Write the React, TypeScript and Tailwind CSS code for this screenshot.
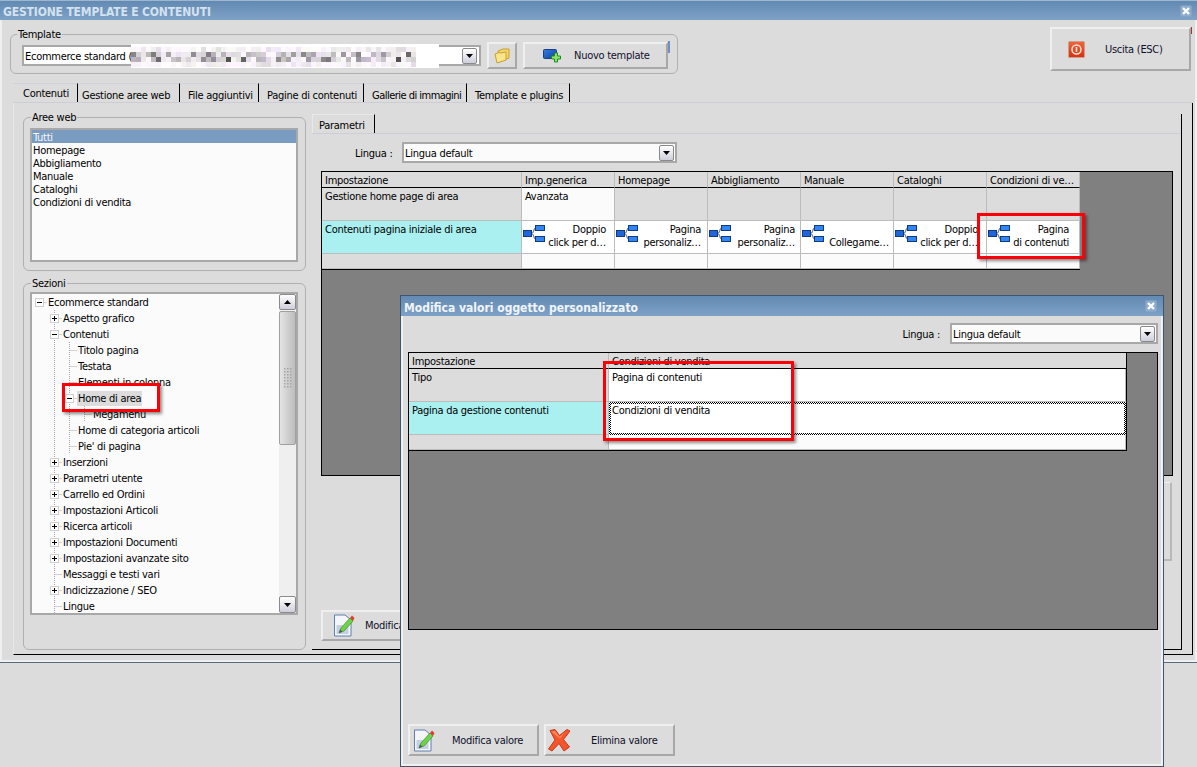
import React from "react";

const btn = "border-2 border-t-[#efefef] border-l-[#efefef] border-r-[#a8a8a8] border-b-[#a8a8a8] bg-[#dcdcdc] text-[#10102a]";

function Close() {
  return (
    <svg width="12" height="12" viewBox="0 0 12 12" className="shrink-0">
      <rect x="0.5" y="0.5" width="11" height="11" rx="1" fill="#8eaccb" />
      <path d="M3 3 L9 9 M9 3 L3 9" stroke="#ffffff" strokeWidth="2.4" />
    </svg>
  );
}

function DropBtn() {
  return (
    <span className="w-[15px] h-[16px] rounded-[2px] border border-[#8a8a8a] bg-linear-to-b from-[#ffffff] to-[#cfcfdc] flex items-center justify-center shrink-0">
      <svg width="7" height="4" viewBox="0 0 7 4"><path d="M0 0 H7 L3.5 4 Z" fill="#000" /></svg>
    </span>
  );
}

function TreeIcon() {
  return (
    <svg width="22" height="17" viewBox="0 0 22 17" className="shrink-0">
      <path d="M9 8 C11.5 8 10 3 13 3 M9 9 C11.5 9 10 14 13 14" stroke="#6d7a88" strokeWidth="1.2" fill="none" />
      <rect x="0.5" y="5.5" width="8" height="6" fill="#1f66dc" stroke="#123a80" />
      <rect x="12.5" y="0.5" width="9" height="5" fill="#2f86f4" stroke="#123a80" />
      <rect x="12.5" y="11.5" width="9" height="5" fill="#2f86f4" stroke="#123a80" />
    </svg>
  );
}

function Folder() {
  return (
    <svg width="16" height="16" viewBox="0 0 16 16">
      <path d="M4 3 L9 1 L15 1 L15 10 L5 14 Z" fill="#f4d56a" stroke="#c9a12e" />
      <path d="M1 6 L5 4.5 L7 5 L12 4 L12 12 L3 15 Z" fill="#fbe58a" stroke="#c9a12e" />
    </svg>
  );
}

function NewIcon() {
  return (
    <svg width="19" height="14" viewBox="0 0 19 14">
      <defs>
        <linearGradient id="nb" x1="0" y1="0" x2="1" y2="1">
          <stop offset="0" stopColor="#2f7fe6" />
          <stop offset="1" stopColor="#143f9c" />
        </linearGradient>
      </defs>
      <rect x="0.5" y="0.5" width="13" height="9" rx="1" fill="url(#nb)" stroke="#1b3f80" />
      <path d="M8.5 7 H11.5 V4 H14.5 V7 H17.5 V10 H14.5 V13 H11.5 V10 H8.5 Z" fill="#8fe36a" stroke="#1c8a1c" />
    </svg>
  );
}

function PowerIcon() {
  return (
    <svg width="17" height="17" viewBox="0 0 17 17">
      <defs>
        <linearGradient id="pw" x1="0" y1="0" x2="0" y2="1">
          <stop offset="0" stopColor="#f0653a" />
          <stop offset="1" stopColor="#d8300f" />
        </linearGradient>
      </defs>
      <rect x="0.5" y="0.5" width="16" height="16" rx="1" fill="url(#pw)" stroke="#c9a090" />
      <circle cx="8.5" cy="8.5" r="4.5" fill="none" stroke="#fbe3d8" strokeWidth="1.5" />
      <rect x="7.7" y="6" width="1.6" height="5" fill="#fbe3d8" />
    </svg>
  );
}

function EditIcon() {
  return (
    <svg width="22" height="23" viewBox="0 0 22 23">
      <path d="M0.5 1 H11 L17 6 V22 H0.5 Z" fill="#f4f6fb" stroke="#5f7fb0" />
      <rect x="2.5" y="11" width="12" height="9" fill="#c5cfe2" />
      <path d="M5 19 L7 14 L16 4 L19 7 L10 17 Z" fill="#6fd34a" stroke="#3a8f22" strokeWidth="0.7" />
      <path d="M16 4 L18 1.5 L20.5 4 L19 7 Z" fill="#e0402a" />
      <path d="M5 19 L6 15.5 L8.5 17.5 Z" fill="#555" />
    </svg>
  );
}

function XIcon() {
  return (
    <svg width="23" height="23" viewBox="0 0 23 23">
      <path d="M2 1.5 L7 0.5 L11.5 6.5 L19 0.5 L22 2 L15.5 10.5 L21.5 18 L16 22 L11 14.5 L4 22 L0.5 20 L7 11 Z" fill="#f4552a" stroke="#c7391a" />
      <path d="M3 2.5 L7 2 L11.5 8 L17 3 L12 9.5 Z" fill="#ff8a5c" />
    </svg>
  );
}

function Mosaic() {
  const rects: React.ReactElement[] = [];
  let s = 7;
  const rnd = () => {
    s = (s * 16807) % 2147483647;
    return (s & 1023) / 1023;
  };
  for (let y = 0; y < 4; y++) {
    for (let x = 0; x < 57; x++) {
      const depth = y === 1 || y === 2 ? 0.55 : 0.1;
      const v = Math.round(255 - rnd() * rnd() * 255 * depth * 1.4);
      const t = Math.round(rnd() * 10);
      rects.push(
        <rect key={`${x}-${y}`} x={x * 5} y={3 + y * 5} width="5" height="5" fill={`rgb(${v},${Math.max(v - t, 0)},${Math.min(v + t - 5, 255)})`} />
      );
    }
  }
  return (
    <svg width="308" height="24" viewBox="0 0 308 24" className="absolute left-[131px] top-[44px]">
      <rect width="308" height="24" fill="#ffffff" />
      {rects}
    </svg>
  );
}

function Slot({ kind }: { kind: "plus" | "minus" | "leaf" | "line" | "none" | "root" }) {
  const c = "#a6a6a6";
  return (
    <svg width="15" height="16" viewBox="0 0 15 16" className="shrink-0">
      {kind !== "none" && kind !== "root" && <path d="M7.5 0 V16" stroke={c} strokeDasharray="1 1" />}
      {(kind === "plus" || kind === "minus" || kind === "leaf" || kind === "root") && <path d="M7.5 8.5 H15" stroke={c} strokeDasharray="1 1" />}
      {(kind === "plus" || kind === "minus" || kind === "root") && (
        <>
          <rect x="3.5" y="4.5" width="8" height="8" fill="#ffffff" stroke="#cfcfcf" />
          <path d="M5 8.5 H10" stroke="#000" />
          {kind === "plus" && <path d="M7.5 6 V11" stroke="#000" />}
        </>
      )}
    </svg>
  );
}

type TreeRow = { t: string; s: ("plus" | "minus" | "leaf" | "line" | "none" | "root")[]; sel?: boolean };
const tree: TreeRow[] = [
  { t: "Ecommerce standard", s: ["root"] },
  { t: "Aspetto grafico", s: ["none", "plus"] },
  { t: "Contenuti", s: ["none", "minus"] },
  { t: "Titolo pagina", s: ["none", "line", "leaf"] },
  { t: "Testata", s: ["none", "line", "leaf"] },
  { t: "Elementi in colonna", s: ["none", "line", "leaf"] },
  { t: "Home di area", s: ["none", "line", "minus"], sel: true },
  { t: "Megamenu", s: ["none", "line", "line", "leaf"] },
  { t: "Home di categoria articoli", s: ["none", "line", "leaf"] },
  { t: "Pie' di pagina", s: ["none", "line", "leaf"] },
  { t: "Inserzioni", s: ["none", "plus"] },
  { t: "Parametri utente", s: ["none", "plus"] },
  { t: "Carrello ed Ordini", s: ["none", "plus"] },
  { t: "Impostazioni Articoli", s: ["none", "plus"] },
  { t: "Ricerca articoli", s: ["none", "plus"] },
  { t: "Impostazioni Documenti", s: ["none", "plus"] },
  { t: "Impostazioni avanzate sito", s: ["none", "plus"] },
  { t: "Messaggi e testi vari", s: ["none", "leaf"] },
  { t: "Indicizzazione / SEO", s: ["none", "plus"] },
  { t: "Lingue", s: ["none", "leaf"] },
];

const headers = ["Impostazione", "Imp.generica", "Homepage", "Abbigliamento", "Manuale", "Cataloghi", "Condizioni di ve…"];
const cell = "border-r border-b border-[#bcbcbc] overflow-hidden whitespace-nowrap";

const icons: { a: string; b: string; pr: string }[] = [
  { a: "Doppio", b: "click per d…", pr: "pr-[8px]" },
  { a: "Pagina", b: "personaliz…", pr: "pr-[6px]" },
  { a: "Pagina", b: "personaliz…", pr: "pr-[5px]" },
  { a: "", b: "Collegame…", pr: "pr-[4px]" },
  { a: "Doppio", b: "click per d…", pr: "pr-[8px]" },
  { a: "Pagina", b: "di contenuti", pr: "pr-[10px]" },
];

const tabs = [
  { t: "Contenuti", c: "w-[65px] pl-[10px] pt-[3px] bg-[#dcdcdc]" },
  { t: "Gestione aree web", c: "w-[102px] pl-[4px] pt-[5px]" },
  { t: "File aggiuntivi", c: "w-[79px] pl-[8px] pt-[5px]" },
  { t: "Pagine di contenuti", c: "w-[105px] pl-[8px] pt-[5px]" },
  { t: "Gallerie di immagini", c: "w-[103px] pl-[8px] pt-[5px] tracking-[-0.52px]" },
  { t: "Template e plugins", c: "w-[103px] pl-[8px] pt-[5px]" },
];

function RedBox({ c }: { c: string }) {
  return <div className={`absolute border-[3px] border-[#fb0007] shadow-[2px_2px_3px_rgba(0,0,0,0.45)] ${c}`} />;
}

export default function App() {
  return (
    <div className="relative w-[1197px] h-[767px] overflow-hidden bg-[#dcdcdc] text-[11px] leading-[13px] tracking-[-0.27px] text-black font-['DejaVu_Sans',sans-serif] font-stretch-condensed">
      {/* main window */}
      <div className="h-[663px] border-b border-[#5a6b7c] flex flex-col">
        <div className="h-[20px] shrink-0 border-t border-[#9fb6cf] bg-linear-to-b from-[#628ab2] to-[#7fa1c6] flex items-center justify-between pl-[3px] pr-[5px]">
          <span className="font-bold text-[12px] tracking-[-0.15px] text-[#d3e2ef] pt-[3px]">GESTIONE TEMPLATE E CONTENUTI</span>
          <Close />
        </div>

        <div className="flex-1 min-h-0 flex flex-col border-l-2 border-r-2 border-b-2 border-[#f0f0f0]">
          <div className="flex items-start pt-[7px] pl-[8px] pr-[4px] h-[54px] shrink-0 justify-between">
            <fieldset className="w-[668px] h-[47px] border border-[#b0b0b0] rounded-[6px] flex items-start">
              <legend className="ml-[6px] px-[1px] h-[14px] leading-[16px]">Template</legend>
              <div className="flex items-center pl-[11px] h-[27px] mt-[1px]">
                <div className="w-[459px] h-[21px] border-2 border-[#a8a8a8] bg-white flex items-center justify-between pl-[1px] pr-[2px]">
                  <span className="pt-[2px]">Ecommerce standard (</span>
                  <DropBtn />
                </div>
                <button className={`${btn} ml-[6px] w-[30px] h-[27px] flex items-center justify-center`}><Folder /></button>
                <button className={`${btn} ml-[6px] w-[145px] h-[27px] flex items-center pl-[18px]`}>
                  <NewIcon />
                  <span className="ml-[12px]">Nuovo template</span>
                </button>
              </div>
            </fieldset>
            <button className={`${btn} w-[141px] h-[44px] flex items-center pl-[16px]`}>
              <PowerIcon />
              <span className="ml-[20px]">Uscita (ESC)</span>
            </button>
          </div>

          <div className="pt-[9px] pl-[11px] shrink-0">
            <div className="flex h-[20px] w-[1180px] border-b border-[#cdcdd6]">
              {tabs.map((t) => (
                <div key={t.t} className={`${t.c} h-[19px] border-r border-r-black border-t border-t-[#d2d2da] whitespace-nowrap`}>{t.t}</div>
              ))}
            </div>
          </div>

          <div className="ml-[11px] w-[1180px] h-[552px] shrink-0 border-l border-[#e8e8e8] border-r border-r-black border-b border-b-black flex pl-[9px] pr-[10px] pt-[7px]">
            <div className="w-[283px] shrink-0">
              <fieldset className="h-[161px] border border-[#b0b0b0] rounded-[6px] px-[6px]">
                <legend className="ml-[1px] px-[1px] h-[14px] leading-[16px]">Aree web</legend>
                <div className="mt-[4px] h-[134px] w-[268px] border-2 border-[#a8a8a8] bg-[#fbfbfb]">
                  {["Tutti", "Homepage", "Abbigliamento", "Manuale", "Cataloghi", "Condizioni di vendita"].map((x, i) => (
                    <div key={x} className={`h-[13px] leading-[15px] pl-[1px] ${i === 0 ? "bg-[#7a9cc0] text-[#f4f8fb]" : ""}`}>{x}</div>
                  ))}
                </div>
              </fieldset>
              <fieldset className="mt-[5px] h-[374px] border border-[#b0b0b0] rounded-[6px] px-[6px]">
                <legend className="ml-[1px] px-[1px] h-[14px] leading-[16px]">Sezioni</legend>
                <div className="mt-[2px] h-[323px] w-[268px] border-2 border-[#a8a8a8] bg-[#fbfbfb] flex overflow-hidden">
                  <div className="w-[247px] shrink-0 h-[319px] overflow-hidden">
                    {tree.map((r) => (
                      <div key={r.t} className="h-[16px] flex items-center">
                        {r.s.map((k, i) => <Slot key={i} kind={k} />)}
                        <span className={`h-[15px] leading-[16px] px-[1px] whitespace-nowrap ${r.sel ? "bg-[#dcdcdc]" : ""}`}>{r.t}</span>
                      </div>
                    ))}
                  </div>
                  <div className="w-[17px] shrink-0 bg-[#efefef] flex flex-col">
                    <div className="h-[16px] rounded-[2px] border border-[#8a8a8a] bg-linear-to-b from-white to-[#cfcfdc] flex items-center justify-center shrink-0">
                      <svg width="7" height="4" viewBox="0 0 7 4"><path d="M0 4 H7 L3.5 0 Z" fill="#000" /></svg>
                    </div>
                    <div className="mt-[1px] h-[134px] rounded-[2px] border border-[#a0a0a0] bg-linear-to-r from-[#e4e4e4] to-[#bdbdbd] flex items-center justify-center shrink-0">
                      <svg width="8" height="21" viewBox="0 0 8 21">
                        {[0, 3, 6, 9, 12, 15, 18].map((y) => (
                          <g key={y} fill="#a4a4a4">
                            <rect x="0" y={y} width="1.5" height="1.5" />
                            <rect x="3" y={y} width="1.5" height="1.5" />
                            <rect x="6" y={y} width="1.5" height="1.5" />
                          </g>
                        ))}
                      </svg>
                    </div>
                    <div className="flex-1" />
                    <div className="h-[17px] rounded-[2px] border border-[#8a8a8a] bg-linear-to-b from-white to-[#cfcfdc] flex items-center justify-center shrink-0">
                      <svg width="7" height="4" viewBox="0 0 7 4"><path d="M0 0 H7 L3.5 4 Z" fill="#000" /></svg>
                    </div>
                  </div>
                </div>
              </fieldset>
            </div>

            <div className="ml-[6px] mt-[4px] w-[870px] h-[536px] border-r border-b border-black flex flex-col">
              <div className="flex h-[20px] border-b border-[#cdcdd6] shrink-0">
                <div className="w-[63px] h-[19px] border-l border-t border-[#e8e8e8] border-r border-r-black pl-[6px] pt-[4px]">Parametri</div>
              </div>
              <div className="flex items-center mt-[8px] h-[21px] shrink-0">
                <span className="ml-[43px] w-[47px] pt-[2px]">Lingua :</span>
                <div className="w-[275px] h-[21px] border-2 border-[#a8a8a8] bg-[#fbfbfb] flex items-center justify-between pl-[1px] pr-[1px]">
                  <span className="pt-[2px]">Lingua default</span>
                  <DropBtn />
                </div>
              </div>

              <div className="ml-[9px] mt-[8px] w-[852px] h-[305px] shrink-0 border border-black bg-[#808080]">
                <div className="w-[758px] border-r border-b border-black grid grid-cols-[200px_93px_93px_93px_93px_93px_93px]">
                  {headers.map((h) => (
                    <div key={h} className="h-[16px] bg-[#dcdcdc] border-r border-[#bcbcbc] border-b border-b-black pl-[3px] pt-[2px] whitespace-nowrap">{h}</div>
                  ))}
                  <div className={`${cell} h-[33px] bg-[#dcdcdc] pl-[3px] pt-[2px]`}>Gestione home page di area</div>
                  <div className={`${cell} h-[33px] bg-[#fbfbfb] pl-[3px] pt-[2px]`}>Avanzata</div>
                  {[1, 2, 3, 4, 5].map((i) => <div key={i} className={`${cell} h-[33px] bg-[#dcdcdc]`} />)}
                  <div className={`${cell} h-[33px] bg-[#aaf0f0] pl-[3px] pt-[2px]`}>Contenuti pagina iniziale di area</div>
                  {icons.map((c, i) => (
                    <div key={i} className={`${cell} h-[33px] bg-white flex pl-[1px] pt-[4px]`}>
                      <TreeIcon />
                      <div className={`flex-1 text-right ${c.pr} -mt-[2px]`}>
                        <div className="h-[13px]">{c.a}</div>
                        <div>{c.b}</div>
                      </div>
                    </div>
                  ))}
                  <div className={`${cell} h-[15px] bg-[#dcdcdc]`} />
                  {[1, 2, 3, 4, 5, 6].map((i) => <div key={i} className={`${cell} h-[15px] bg-[#fbfbfb]`} />)}
                </div>
              </div>

              <div className="mt-[6px] ml-[108px] w-[752px] h-[79px] shrink-0 border-t border-l border-[#efefef] border-r-2 border-b-2 border-r-[#b8b8b8] border-b-[#b8b8b8]" />

              <button className={`${btn} mt-[49px] ml-[9px] w-[131px] h-[31px] flex items-center pl-[11px] shrink-0`}>
                <EditIcon />
                <span className="ml-[9px]">Modifica valore</span>
              </button>
            </div>
          </div>
        </div>
      </div>

      <Mosaic />
      <div className="absolute left-[668px] top-[41px] w-[2px] h-[12px] bg-[#6f8fc0]" />
      <div className="absolute left-[1191px] top-[27px] w-[1px] h-[7px] bg-[#b03030]" />

      <RedBox c="left-[977px] top-[213px] w-[108px] h-[46px]" />
      <RedBox c="left-[62px] top-[383px] w-[98px] h-[29px]" />

      {/* dialog */}
      <div className="absolute left-[400px] top-[295px] w-[764px] h-[472px] border border-[#3d566f] flex flex-col bg-[#dcdcdc]">
        <div className="h-[20px] shrink-0 bg-linear-to-b from-[#628ab2] to-[#7fa1c6] flex items-center justify-between pl-[3px] pr-[6px]">
          <span className="font-bold text-[12px] tracking-normal text-[#f0f5fa] pt-[5px]">Modifica valori oggetto personalizzato</span>
          <Close />
        </div>
        <div className="flex-1 border-l-2 border-r-2 border-b-2 border-[#f0f0f0] pl-[5px] pr-[3px] pt-[7px]">
          <div className="flex items-center justify-end h-[21px]">
            <span className="mr-[10px] pt-[2px]">Lingua :</span>
            <div className="w-[208px] h-[21px] border-2 border-[#a8a8a8] bg-[#fbfbfb] flex items-center justify-between pl-[1px] pr-[1px]">
              <span className="pt-[2px]">Lingua default</span>
              <DropBtn />
            </div>
          </div>
          <div className="mt-[8px] h-[278px] border border-black bg-[#808080]">
            <div className="w-[718px] border-r border-b border-black grid grid-cols-[200px_517px]">
              <div className="h-[16px] bg-[#dcdcdc] border-r border-[#bcbcbc] border-b border-b-black pl-[3px] pt-[2px]">Impostazione</div>
              <div className="h-[16px] bg-[#dcdcdc] border-b border-b-black pl-[3px] pt-[2px]">Condizioni di vendita</div>
              <div className={`${cell} h-[33px] bg-[#dcdcdc] pl-[3px] pt-[2px]`}>Tipo</div>
              <div className={`${cell} h-[33px] bg-white pl-[3px] pt-[2px]`}>Pagina di contenuti</div>
              <div className={`${cell} h-[33px] bg-[#aaf0f0] pl-[3px] pt-[2px]`}>Pagina da gestione contenuti</div>
              <div className="h-[33px] p-[2px] bg-[repeating-conic-gradient(#000_0_25%,#fff_0_50%)] [background-size:2px_2px]">
                <div className="h-full bg-white pl-[1px]">Condizioni di vendita</div>
              </div>
              <div className={`${cell} h-[15px] bg-[#dcdcdc]`} />
              <div className={`${cell} h-[15px] bg-[#fbfbfb]`} />
            </div>
          </div>
          <div className="mt-[94px] flex gap-[5px]">
            <button className={`${btn} w-[131px] h-[32px] flex items-center pl-[4px]`}>
              <EditIcon />
              <span className="ml-[16px]">Modifica valore</span>
            </button>
            <button className={`${btn} w-[131px] h-[32px] flex items-center pl-[2px]`}>
              <XIcon />
              <span className="ml-[20px]">Elimina valore</span>
            </button>
          </div>
        </div>
      </div>

      <RedBox c="left-[603px] top-[361px] w-[191px] h-[80px]" />
    </div>
  );
}
